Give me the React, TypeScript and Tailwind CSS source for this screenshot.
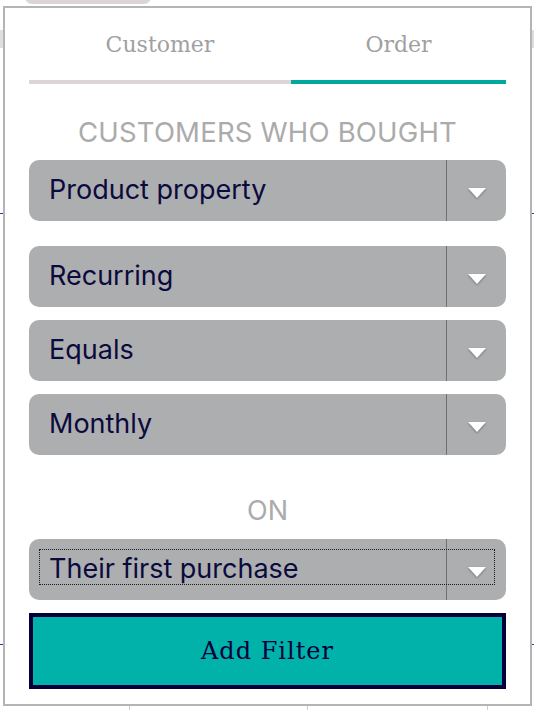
import { ReactNode } from "react";

const Arrow = () => (
  <svg width="20" height="12" viewBox="0 0 20 12" className="drop-shadow-[0_1px_1px_rgba(0,0,0,0.35)]">
    <path d="M1 1h18l-9 10z" fill="#ffffff" />
  </svg>
);

const Select = ({ children, focused = false }: { children: ReactNode; focused?: boolean }) => (
  <div className="relative flex h-[61px] items-stretch rounded-[10px] bg-[#adaeb0]">
    <div className="flex flex-1 items-center pl-5 text-[27px] text-[#0b0a3d] [font-family:Inter,sans-serif]">
      {children}
    </div>
    <div className="w-px bg-[#6f7072]" />
    <div className="flex w-[59px] items-center justify-center pt-1">
      <Arrow />
    </div>
    {focused && (
      <div className="pointer-events-none absolute left-[10px] right-[11px] top-[10px] bottom-[15px] border border-dotted border-[#1a1a1a]" />
    )}
  </div>
);

export default function App() {
  return (
    <div className="relative h-[710px] w-[534px] overflow-hidden bg-white">
      <div className="absolute left-[25px] top-[-10px] h-[14px] w-[126px] rounded-[8px] bg-[#dcd4d6]" />
      <div className="absolute left-0 top-[30px] h-[18px] w-[3px] bg-[#dedede]" />
      <div className="absolute right-0 top-[30px] h-[18px] w-[3px] bg-[#dedede]" />
      <div className="absolute left-0 top-[213px] h-px w-[3px] bg-[#3333aa]" />
      <div className="absolute right-0 top-[213px] h-px w-[3px] bg-[#3333aa]" />
      <div className="absolute left-0 top-[644px] h-px w-[3px] bg-[#3333aa]" />
      <div className="absolute right-0 top-[644px] h-px w-[3px] bg-[#3333aa]" />
      <div className="absolute left-[129px] top-[706px] h-[4px] w-px bg-[#cccccc]" />
      <div className="absolute left-[307px] top-[706px] h-[4px] w-px bg-[#cccccc]" />
      <div className="absolute left-[487px] top-[706px] h-[4px] w-px bg-[#cccccc]" />

      <div className="absolute left-[3px] top-[6px] flex h-[700px] w-[529px] flex-col border-2 border-[#b4b4b4] bg-white px-[24px]">
        <div className="flex pt-[16px] [font-family:'DejaVu_Serif',serif] text-[22px] text-[#a0a0a0]">
          <div className="flex w-[262px] flex-col items-center">
            <span className="h-[42px] leading-[42px]">Customer</span>
            <div className="mt-[14px] h-[4px] w-full bg-[#dcd4d6]" />
          </div>
          <div className="flex flex-1 flex-col items-center">
            <span className="h-[42px] leading-[42px]">Order</span>
            <div className="mt-[14px] h-[4px] w-full bg-[#00a89e]" />
          </div>
        </div>

        <div className="mt-[33px] text-center text-[27.5px] leading-[30px] tracking-[0.2px] text-[#ababab] [font-family:Inter,sans-serif]">
          CUSTOMERS WHO BOUGHT
        </div>

        <div className="mt-[13px]">
          <Select>Product property</Select>
        </div>
        <div className="mt-[25px] flex flex-col gap-[13px]">
          <Select>Recurring</Select>
          <Select>Equals</Select>
          <Select>Monthly</Select>
        </div>

        <div className="mt-[41px] text-center text-[27px] leading-[30px] text-[#ababab] [font-family:Inter,sans-serif]">
          ON
        </div>

        <div className="mt-[13px]">
          <Select focused>Their first purchase</Select>
        </div>

        <button className="mt-[13px] h-[76px] w-full border-4 border-[#05003a] bg-[#00b2aa] text-[24px] tracking-[1px] text-[#05003a] [font-family:'DejaVu_Serif',serif]">
          Add Filter
        </button>
      </div>
    </div>
  );
}
